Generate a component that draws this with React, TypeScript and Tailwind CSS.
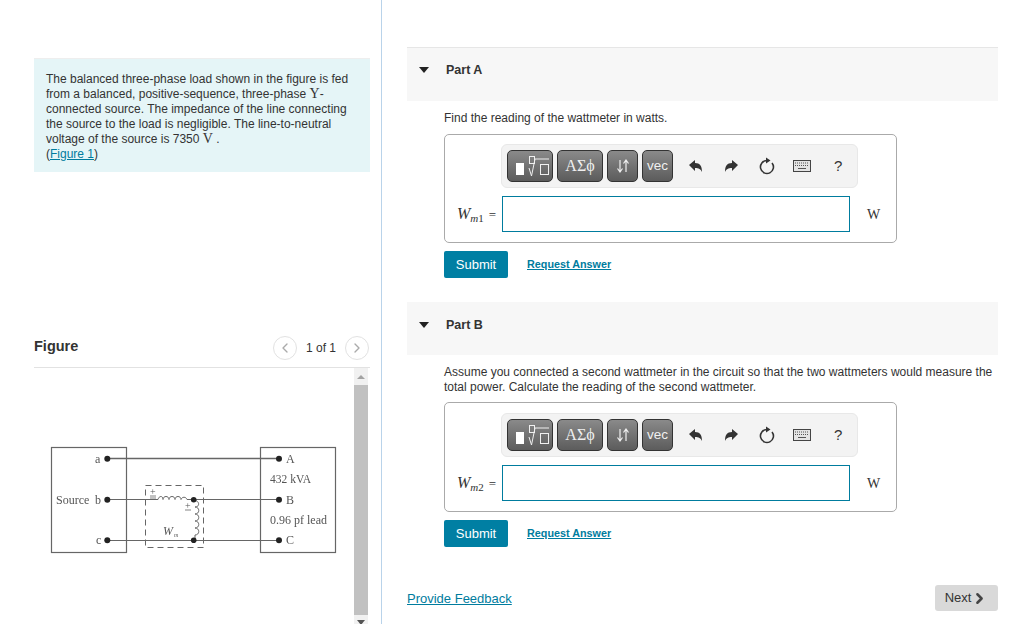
import { ChevronLeft, ChevronRight } from "lucide-react";

function Diagram() {
  const serif = { fontFamily: '"Liberation Serif", serif' };
  return (
    <svg width="320" height="130" viewBox="0 0 320 130" className="blur-[0.35px]" style={serif}>
      <g fill="none" stroke="#666" strokeWidth="1.2">
        <rect x="17.5" y="17.5" width="75" height="105" />
        <rect x="226.5" y="17.5" width="75" height="105" />
        <path d="M73 28.5H245" strokeWidth="1.4" />
        <path d="M73 69.5H124M153 69.5H245" />
        <path d="M73 110.5H245" />
        <path d="M111.5 55.5H169.5V117.5H111.5Z" strokeDasharray="6 4" strokeWidth="1" />
        <path d="M124 69.5c1-4 5-4 5 0c0-4 6-4 6 0c0-4 6-4 6 0c0-4 6-4 6 0c1-3 5-3 6 0" strokeWidth="1" />
        <path d="M160 70c6 1 6 7 1 7c5 0 5 7 0 7c5 0 5 7 0 7c5 0 5 7 0 7c5 0 5 7 0 7v5" strokeWidth="1" />
        <path d="M116 66h6M151 80h6M116 68h6" strokeWidth="0.8" />
      </g>
      <g fill="#222">
        <circle cx="73.3" cy="28.7" r="3" />
        <circle cx="73.3" cy="69.7" r="3" />
        <circle cx="73.3" cy="110.3" r="3" />
        <circle cx="245" cy="28.7" r="3" />
        <circle cx="245" cy="69.7" r="3" />
        <circle cx="245" cy="110.3" r="3" />
        <circle cx="159.7" cy="69.7" r="2.8" />
        <circle cx="159.7" cy="110.3" r="2.8" />
      </g>
      <g fill="#555" fontSize="12">
        <text x="61" y="33">a</text>
        <text x="22" y="74">Source</text>
        <text x="61" y="74">b</text>
        <text x="62" y="114">c</text>
        <text x="252" y="33">A</text>
        <text x="236" y="53" fontSize="11.5">432 kVA</text>
        <text x="252" y="74">B</text>
        <text x="236" y="94">0.96 pf lead</text>
        <text x="252" y="114">C</text>
        <text x="116" y="65" fontSize="10">+</text>
        <text x="151" y="79" fontSize="10">+</text>
        <text x="129" y="105" fontStyle="italic">W</text>
        <text x="140" y="107" fontSize="6" fontStyle="italic">m</text>
      </g>
    </svg>
  );
}

function MathToolbar() {
  const btn =
    "h-[32px] rounded-[5px] border border-[#333] bg-gradient-to-b from-[#8a8a8a] to-[#5c5c5c] flex items-center justify-center text-[#f0f0f0]";
  return (
    <div className="ml-[56px] w-[357px] h-[44px] rounded-[6px] bg-[#f3f3f3] border border-[#e8e8e8] flex items-center pl-[5px]">
      <div className={`${btn} w-[46px]`}>
        <svg width="44" height="30" viewBox="0 0 44 30" fill="none" stroke="#f0f0f0">
          <rect x="8" y="12" width="8" height="12" fill="#fff" stroke="none" />
          <rect x="21.5" y="5.5" width="5" height="7" strokeWidth="1" />
          <path d="M21 17l2.5 8l3.500-17h14" strokeWidth="1" />
          <rect x="32.5" y="13.5" width="8" height="10" strokeWidth="1" />
        </svg>
      </div>
      <div className={`${btn} w-[46px] ml-[4px] text-[16px] font-['Liberation_Serif',serif]`}>ΑΣϕ</div>
      <div className={`${btn} w-[31px] ml-[4px]`}>
        <svg width="16" height="16" viewBox="0 0 16 16" fill="none" stroke="#f0f0f0" strokeWidth="1.2">
          <path d="M5 2v11M2.5 10.5L5 14l2.5-3.5M11 14V3M8.5 5.5L11 2l2.5 3.5" />
        </svg>
      </div>
      <div className={`${btn} w-[31px] ml-[4px] text-[13.5px]`}>vec</div>
      <svg width="16" height="16" viewBox="0 0 16 16" fill="#333" className="ml-[15px]">
        <path d="M1 7l6-5v3c5 0 7 3 7 9c-1.5-3-3-4-7-4v3z" />
      </svg>
      <svg width="16" height="16" viewBox="0 0 16 16" fill="#333" className="ml-[19px]">
        <path d="M15 7L9 2v3c-5 0-7 3-7 9c1.5-3 3-4 7-4v3z" />
      </svg>
      <svg width="18" height="18" viewBox="0 0 18 18" fill="none" className="ml-[19px]">
        <path d="M9 3.5a6.5 6.5 0 1 0 5 2.4" stroke="#333" strokeWidth="1.6" />
        <path d="M8 0.5L12.5 3.5L8 6.5z" fill="#333" />
      </svg>
      <svg width="18" height="12" viewBox="0 0 18 12" className="ml-[17px]">
        <rect x="0.5" y="0.5" width="17" height="11" fill="#e4e4e4" stroke="#444" />
        <path d="M2 3h14M2 5.5h14" stroke="#555" strokeDasharray="1 1" />
        <path d="M5 8.5h8" stroke="#555" />
      </svg>
      <span className="ml-[23px] text-[15px] text-[#333]">?</span>
    </div>
  );
}

function AnswerBox({ sub, first }: { sub: string; first: boolean }) {
  return (
    <div
      className={
        first
          ? "mt-[8px] ml-[37px] w-[453px] h-[109px] border border-[#aaa] rounded-[5px] pt-[9px]"
          : "mt-[7px] ml-[37px] w-[453px] h-[110px] border border-[#aaa] rounded-[5px] pt-[10px]"
      }
    >
      <MathToolbar />
      <div className="mt-[8px] flex items-center h-[36px]">
        <div className="w-[57px] pr-[6px] flex justify-end items-baseline text-[#333] font-['Liberation_Serif',serif]">
          <span className="italic text-[16px]">W</span>
          <span className="text-[11px] translate-y-[3px]">
            <i>m</i>
            {sub}
          </span>
          <span className="ml-[5px] text-[13px]">=</span>
        </div>
        <div className="w-[348px] h-[36px] border border-[#007c9e]" />
        <span className="ml-[17px] text-[14px] text-[#333] font-['Liberation_Serif',serif]">W</span>
      </div>
    </div>
  );
}

function Part({ title, children, sub, first = false }: { title: string; children: React.ReactNode; sub: string; first?: boolean }) {
  return (
    <section>
      <div
        className={
          first
            ? "h-[54px] bg-[#f7f7f7] border-t border-[#e6e6e6] flex items-start pt-[13px]"
            : "h-[53px] bg-[#f7f7f7] flex items-start pt-[14px]"
        }
      >
        <div className="ml-[12px] mt-[6px] w-0 h-0 border-x-[5px] border-x-transparent border-t-[6px] border-t-[#222]" />
        <span className="ml-[17px] text-[12.5px] font-bold text-[#333]">{title}</span>
      </div>
      <div className="ml-[37px] mt-[9px] text-[12px] leading-[15px] text-[#333]">{children}</div>
      <AnswerBox sub={sub} first={first} />
      <div className="mt-[8px] ml-[37px] flex items-center">
        <button className="w-[64px] h-[27px] bg-[#007fa3] rounded-[2px] text-white text-[13px]">Submit</button>
        <a className="ml-[19px] text-[10.8px] font-bold text-[#007c9e] underline">Request Answer</a>
      </div>
    </section>
  );
}

export default function App() {
  return (
    <div className="w-[1024px] h-[624px] overflow-hidden bg-white flex font-['Liberation_Sans',sans-serif]">
      <aside className="w-[382px] h-[624px] border-r border-[#b9d3ea] pt-[58px] pl-[34px] shrink-0">
        <div className="w-[336px] h-[114px] bg-[#e5f5f7] border-t border-[#eeeeee] pt-[13px] pl-[12px] text-[12px] leading-[15px] text-[#333]">
          <p className="w-[310px]">
            The balanced three-phase load shown in the figure is fed from a balanced, positive-sequence, three-phase{" "}
            <span className="font-['Liberation_Serif',serif] text-[14px] leading-none">Y</span>-connected source. The impedance of
            the line connecting the source to the load is negligible. The line-to-neutral voltage of the source is 7350{" "}
            <span className="font-['Liberation_Serif',serif] text-[14px] leading-none">V</span> .
          </p>
          <p>
            (<a className="text-[#007c9e] underline">Figure 1</a>)
          </p>
        </div>

        <div className="mt-[158px] w-[336px] h-[38px] border-b border-[#e2e2e2] flex items-start">
          <h2 className="mt-[6px] text-[14.5px] font-bold text-[#333] flex-1">Figure</h2>
          <div className="flex items-center mt-[6px] mr-[1px]">
            <span className="w-[24px] h-[24px] rounded-full border border-[#e2e2e2] flex items-center justify-center">
              <ChevronLeft size={16} color="#aaa" />
            </span>
            <span className="mx-[9px] text-[12px] text-[#333]">1 of 1</span>
            <span className="w-[24px] h-[24px] rounded-full border border-[#e2e2e2] flex items-center justify-center">
              <ChevronRight size={16} color="#aaa" />
            </span>
          </div>
        </div>

        <div className="w-[336px] flex">
          <div className="w-[320px] pt-[62px]">
            <Diagram />
          </div>
          <div className="w-[14px] h-[261px] flex flex-col bg-[#f1f1f1]">
            <div className="h-[17px] flex items-center justify-center">
              <div className="w-0 h-0 border-x-[4px] border-x-transparent border-b-[4px] border-b-[#a3a3a3]" />
            </div>
            <div className="flex-1 bg-[#c1c1c1]" />
            <div className="h-[14px] flex items-center justify-center">
              <div className="w-0 h-0 border-x-[4px] border-x-transparent border-t-[5px] border-t-[#555]" />
            </div>
          </div>
        </div>
      </aside>

      <main className="w-[591px] ml-[25px] pt-[47px]">
        <Part title="Part A" sub="1" first>
          <p className="mt-[10px]">Find the reading of the wattmeter in watts.</p>
        </Part>
        <div className="h-[24px]" />
        <Part title="Part B" sub="2">
          <p className="mt-[10px]">
            Assume you connected a second wattmeter in the circuit so that the two wattmeters would measure the total power.
            Calculate the reading of the second wattmeter.
          </p>
        </Part>
        <div className="mt-[38px] flex items-center justify-between">
          <a className="mt-[2px] text-[13px] text-[#007c9e] underline">Provide Feedback</a>
          <button className="w-[63px] h-[26px] bg-[#d9d9d9] rounded-[3px] text-[13px] text-[#333] flex items-center justify-center">
            Next
            <ChevronRight size={17} strokeWidth={3.5} color="#444" />
          </button>
        </div>
      </main>
    </div>
  );
}
